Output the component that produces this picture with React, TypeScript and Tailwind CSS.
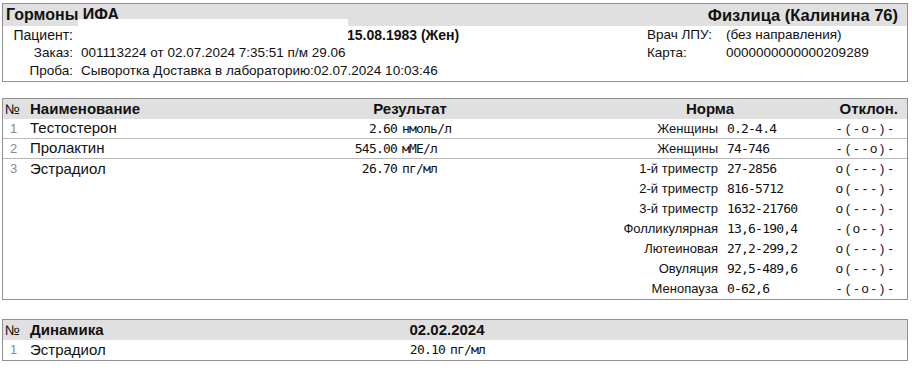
const sans = { fontFamily: '"Liberation Sans", Arial, sans-serif' };

const mono = '[font-family:"DejaVu_Sans_Mono",monospace] text-[13px] tracking-[-0.8px]';

function Dev({ v }: { v: string }) {
  return (
    <div className="flex w-[60px] text-[13px]">
      {v.split("").map((c, i) => (
        <span key={i} className="w-[8.6px] text-center">
          {c}
        </span>
      ))}
    </div>
  );
}

function NormLine({ label, value, dev, h }: { label: string; value: string; dev: string; h: string }) {
  return (
    <div className={`flex ${h} items-center`}>
      <div className="w-[158px] text-right text-[13px]">{label}</div>
      <div className={`w-[117px] pl-[9px] ${mono}`}>{value}</div>
      <Dev v={dev} />
    </div>
  );
}

const rows = [
  { n: "1", name: "Тестостерон", num: "2.60", unit: "нмоль/л", norms: [["Женщины", "0.2-4.4", "-(-o-)-"]] },
  { n: "2", name: "Пролактин", num: "545.00", unit: "мМЕ/л", norms: [["Женщины", "74-746", "-(--o)-"]] },
  {
    n: "3",
    name: "Эстрадиол",
    num: "26.70",
    unit: "пг/мл",
    norms: [
      ["1-й триместр", "27-2856", "o(---)-"],
      ["2-й триместр", "816-5712", "o(---)-"],
      ["3-й триместр", "1632-21760", "o(---)-"],
      ["Фолликулярная", "13,6-190,4", "-(o--)-"],
      ["Лютеиновая", "27,2-299,2", "o(---)-"],
      ["Овуляция", "92,5-489,6", "o(---)-"],
      ["Менопауза", "0-62,6", "-(-o-)-"],
    ],
  },
];

export default function App() {
  return (
    <div className="bg-white w-[912px] h-[373px] pt-[3px] pl-[2px] text-[#111]" style={sans}>
      {/* header box */}
      <div className="relative w-[906px] border border-[#8f8f8f]">
        <div className="flex h-[22px] items-center justify-between bg-[#e0e0e0] pl-[3px] pr-[9px] font-bold">
          <span className="text-[16px]">Гормоны ИФА</span>
          <span className="text-[16.5px]">Физлица (Калинина 76)</span>
        </div>
        <div className="absolute left-[75px] top-[15px] h-[22px] w-[270px] bg-white" />
        <div className="flex text-[13.5px]">
          <div className="w-[644px]">
            <div className="flex h-[18px] items-center">
              <div className="w-[70px] text-right text-[14px]">Пациент:</div>
              <div className="pl-[274px] text-[14px] font-bold">15.08.1983 (Жен)</div>
            </div>
            <div className="flex h-[18px] items-center">
              <div className="w-[70px] text-right">Заказ:</div>
              <div className="pl-[8px]">001113224 от 02.07.2024 7:35:51 п/м 29.06</div>
            </div>
            <div className="flex h-[19px] items-center">
              <div className="w-[70px] text-right">Проба:</div>
              <div className="pl-[8px]">Сыворотка Доставка в лабораторию:02.07.2024 10:03:46</div>
            </div>
          </div>
          <div>
            <div className="flex h-[18px] items-center">
              <div className="w-[79px]">Врач ЛПУ:</div>
              <div>(без направления)</div>
            </div>
            <div className="flex h-[18px] items-center">
              <div className="w-[79px]">Карта:</div>
              <div>0000000000000209289</div>
            </div>
          </div>
        </div>
      </div>

      {/* results table */}
      <div className="mt-[16px] w-[906px] border border-[#8f8f8f]">
        <div className="flex h-[20px] items-center bg-[#e0e0e0] text-[15px] font-bold">
          <div className="w-[27px] pl-[2px] text-[14px] font-normal">№</div>
          <div className="w-[270px]">Наименование</div>
          <div className="w-[220px] text-center">Результат</div>
          <div className="w-[80px]" />
          <div className="w-[220px] text-center">Норма</div>
          <div className="w-[78px] text-right">Отклон.</div>
        </div>
        {rows.map((r, i) => {
          const last = i === rows.length - 1;
          const h = last ? "h-[20px]" : "h-[19px]";
          return (
            <div key={r.n} className={`flex ${last ? "" : "border-b border-[#b8b8b8]"}`}>
              <div className={`flex ${h} w-[27px] items-center justify-center pr-[6px] text-[13px] text-[#8a8a8a]`}>{r.n}</div>
              <div className={`flex ${h} w-[270px] items-center text-[15px]`}>{r.name}</div>
              <div className={`flex ${h} items-center`}>
                <div className={`w-[97px] text-right ${mono}`}>{r.num}</div>
                <div className={`w-[163px] pl-[5px] ${mono}`}>{r.unit}</div>
              </div>
              <div>
                {r.norms.map((n) => (
                  <NormLine key={n[0]} label={n[0]} value={n[1]} dev={n[2]} h={h} />
                ))}
              </div>
            </div>
          );
        })}
      </div>

      {/* dynamics table */}
      <div className="mt-[19px] w-[906px] border border-[#8f8f8f]">
        <div className="flex h-[20px] items-center bg-[#e0e0e0] text-[15px] font-bold">
          <div className="w-[27px] pl-[2px] text-[14px] font-normal">№</div>
          <div className="w-[270px]">Динамика</div>
          <div className="w-[294px] text-center">02.02.2024</div>
        </div>
        <div className="flex h-[20px] items-center">
          <div className="flex w-[27px] justify-center pr-[6px] text-[13px] text-[#8a8a8a]">1</div>
          <div className="w-[270px] text-[15px]">Эстрадиол</div>
          <div className={`w-[145px] text-right ${mono}`}>20.10</div>
          <div className={`pl-[5px] ${mono}`}>пг/мл</div>
        </div>
      </div>
    </div>
  );
}
